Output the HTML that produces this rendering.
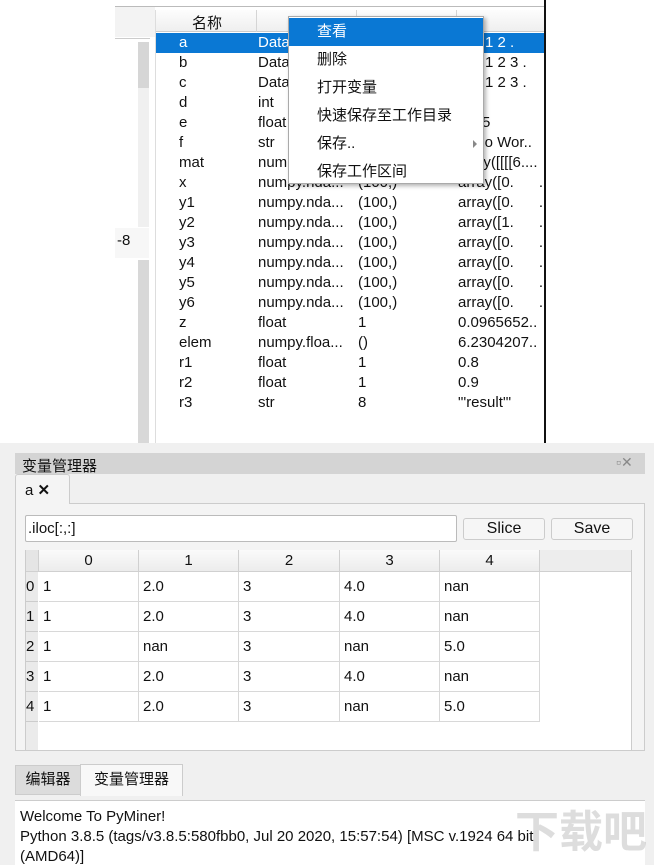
<!DOCTYPE html>
<html><head><meta charset="utf-8"><style>
*{margin:0;padding:0;box-sizing:border-box}
body{width:654px;height:865px;position:relative;overflow:hidden;background:#fff;font-family:"Liberation Sans","Noto Sans CJK SC",sans-serif;font-size:15px;color:#111}
.a{position:absolute}
.row{position:absolute;left:155px;width:389px;height:20px;line-height:20px;font-size:15px}
.row span{position:absolute;white-space:nowrap}
.cell{position:absolute;height:30px;line-height:30px;border-right:1px solid #d8d8d8;border-bottom:1px solid #d8d8d8;padding-left:4px;background:#fff}
.hd{position:absolute;top:550px;height:22px;line-height:22px;text-align:center;background:linear-gradient(#fafafa,#ececec);border-right:1px solid #d0d0d0;border-bottom:1px solid #d0d0d0}
.rh{position:absolute;left:26px;width:12px;height:30px;line-height:30px;background:#eaeaea;border-bottom:1px solid #ccc;font-size:15px;overflow:hidden}
.mi{position:absolute;left:0;width:194px;height:28px;line-height:28px;padding-left:28px;font-size:15px}
</style></head><body>
<div class="a" style="left:115px;top:6px;width:430px;height:1px;background:#bbb"></div>
<div class="a" style="left:115px;top:7px;width:40px;height:30px;background:#f3f3f3"></div>
<div class="a" style="left:115px;top:38px;width:35px;height:1px;background:#ccc"></div>
<div class="a" style="left:138px;top:42px;width:11px;height:185px;background:#f0f0f0"></div>
<div class="a" style="left:138px;top:42px;width:11px;height:46px;background:#d6d6d6"></div>
<div class="a" style="left:115px;top:228px;width:34px;height:30px;background:#f7f7f7"></div>
<div class="a" style="left:117px;top:232px;font-size:15px">-8</div>
<div class="a" style="left:138px;top:260px;width:11px;height:183px;background:#d8d8d8"></div>
<div class="a" style="left:155px;top:10px;width:389px;height:433px;border-left:1px solid #ddd;background:#fff"></div>
<div class="a" style="left:156px;top:10px;width:388px;height:22px;background:linear-gradient(#fdfdfd,#efefef);border-bottom:1px solid #ccc"></div>
<div class="a" style="left:256px;top:10px;width:1px;height:22px;background:#d5d5d5"></div>
<div class="a" style="left:356px;top:10px;width:1px;height:22px;background:#d5d5d5"></div>
<div class="a" style="left:456px;top:10px;width:1px;height:22px;background:#d5d5d5"></div>
<div class="a" style="left:192px;top:12px;font-size:15px">名称</div>
<div class="a" style="left:544px;top:0;width:2px;height:443px;background:#111"></div>
<div class="a" style="left:156px;top:33px;width:388px;height:20px;background:#0a78d4"></div>
<div class="row" style="top:33px;color:#fff"><span style="left:24px">a</span><span style="left:103px">Data</span><span style="left:330px">1 2 .</span></div>
<div class="row" style="top:53px"><span style="left:24px">b</span><span style="left:103px">Data</span><span style="left:330px">1 2 3 .</span></div>
<div class="row" style="top:73px"><span style="left:24px">c</span><span style="left:103px">Data</span><span style="left:330px">1 2 3 .</span></div>
<div class="row" style="top:93px"><span style="left:24px">d</span><span style="left:103px">int</span></div>
<div class="row" style="top:113px"><span style="left:24px">e</span><span style="left:103px">float</span><span style="left:327px">5</span></div>
<div class="row" style="top:133px"><span style="left:24px">f</span><span style="left:103px">str</span><span style="left:323px">llo Wor..</span></div>
<div class="row" style="top:153px"><span style="left:24px">mat</span><span style="left:103px">num</span><span style="left:320px">ay([[[[6....</span></div>
<div class="row" style="top:173px"><span style="left:24px">x</span><span style="left:103px">numpy.nda...</span><span style="left:203px">(100,)</span><span style="left:303px">array([0.&nbsp;&nbsp;&nbsp;&nbsp;&nbsp;&nbsp;.</span></div>
<div class="row" style="top:193px"><span style="left:24px">y1</span><span style="left:103px">numpy.nda...</span><span style="left:203px">(100,)</span><span style="left:303px">array([0.&nbsp;&nbsp;&nbsp;&nbsp;&nbsp;&nbsp;.</span></div>
<div class="row" style="top:213px"><span style="left:24px">y2</span><span style="left:103px">numpy.nda...</span><span style="left:203px">(100,)</span><span style="left:303px">array([1.&nbsp;&nbsp;&nbsp;&nbsp;&nbsp;&nbsp;.</span></div>
<div class="row" style="top:233px"><span style="left:24px">y3</span><span style="left:103px">numpy.nda...</span><span style="left:203px">(100,)</span><span style="left:303px">array([0.&nbsp;&nbsp;&nbsp;&nbsp;&nbsp;&nbsp;.</span></div>
<div class="row" style="top:253px"><span style="left:24px">y4</span><span style="left:103px">numpy.nda...</span><span style="left:203px">(100,)</span><span style="left:303px">array([0.&nbsp;&nbsp;&nbsp;&nbsp;&nbsp;&nbsp;.</span></div>
<div class="row" style="top:273px"><span style="left:24px">y5</span><span style="left:103px">numpy.nda...</span><span style="left:203px">(100,)</span><span style="left:303px">array([0.&nbsp;&nbsp;&nbsp;&nbsp;&nbsp;&nbsp;.</span></div>
<div class="row" style="top:293px"><span style="left:24px">y6</span><span style="left:103px">numpy.nda...</span><span style="left:203px">(100,)</span><span style="left:303px">array([0.&nbsp;&nbsp;&nbsp;&nbsp;&nbsp;&nbsp;.</span></div>
<div class="row" style="top:313px"><span style="left:24px">z</span><span style="left:103px">float</span><span style="left:203px">1</span><span style="left:303px">0.0965652..</span></div>
<div class="row" style="top:333px"><span style="left:24px">elem</span><span style="left:103px">numpy.floa...</span><span style="left:203px">()</span><span style="left:303px">6.2304207..</span></div>
<div class="row" style="top:353px"><span style="left:24px">r1</span><span style="left:103px">float</span><span style="left:203px">1</span><span style="left:303px">0.8</span></div>
<div class="row" style="top:373px"><span style="left:24px">r2</span><span style="left:103px">float</span><span style="left:203px">1</span><span style="left:303px">0.9</span></div>
<div class="row" style="top:393px"><span style="left:24px">r3</span><span style="left:103px">str</span><span style="left:203px">8</span><span style="left:303px">"'result'"</span></div>
<div class="a" style="left:288px;top:16px;width:196px;height:168px;background:#fff;border:1px solid #aaa;box-shadow:2px 2px 4px rgba(0,0,0,.3)">
<div class="mi" style="top:1px;background:#0a78d4;color:#fff">查看</div>
<div class="mi" style="top:29px">删除</div>
<div class="mi" style="top:57px">打开变量</div>
<div class="mi" style="top:85px">快速保存至工作目录</div>
<div class="mi" style="top:113px">保存..</div>
<div class="a" style="left:184px;top:123px;width:0;height:0;border-left:4px solid #888;border-top:4px solid transparent;border-bottom:4px solid transparent"></div>
<div class="mi" style="top:141px">保存工作区间</div>
</div>
<div class="a" style="left:0;top:443px;width:654px;height:422px;background:#f0f0f0"></div>
<div class="a" style="left:15px;top:453px;width:630px;height:21px;background:#d4d4d4"></div>
<div class="a" style="left:22px;top:455px;font-size:15px">变量管理器</div>
<div class="a" style="left:616px;top:454px;font-size:14px;color:#888">▫✕</div>
<div class="a" style="left:15px;top:503px;width:630px;height:248px;border:1px solid #ccc;background:#f4f4f4"></div>
<div class="a" style="left:15px;top:474px;width:55px;height:30px;background:#f4f4f4;border:1px solid #ccc;border-bottom:none;border-radius:3px 3px 0 0"></div>
<div class="a" style="left:25px;top:481px;font-size:15px">a <b>✕</b></div>
<div class="a" style="left:25px;top:515px;width:432px;height:27px;background:#fff;border:1px solid #bbb;border-radius:2px;line-height:25px;padding-left:2px">.iloc[:,:]</div>
<div class="a" style="left:463px;top:518px;width:82px;height:22px;background:#f6f6f6;border:1px solid #ccc;border-radius:3px;text-align:center;line-height:20px;font-size:16px">Slice</div>
<div class="a" style="left:551px;top:518px;width:82px;height:22px;background:#f6f6f6;border:1px solid #ccc;border-radius:3px;text-align:center;line-height:20px;font-size:16px">Save</div>
<div class="a" style="left:25px;top:550px;width:607px;height:201px;background:#fff;border:1px solid #ccc"></div>
<div class="a" style="left:26px;top:551px;width:12px;height:199px;background:#ebebeb"></div>
<div class="hd" style="left:26px;width:13px;background:#e5e5e5"></div>
<div class="hd" style="left:39px;width:100px">0</div>
<div class="hd" style="left:139px;width:100px">1</div>
<div class="hd" style="left:239px;width:101px">2</div>
<div class="hd" style="left:340px;width:100px">3</div>
<div class="hd" style="left:440px;width:100px">4</div>
<div class="hd" style="left:540px;width:91px;background:#ededed;border-right:none"></div>
<div id="tbl"></div>
<script>
var d=[["1","2.0","3","4.0","nan"],["1","2.0","3","4.0","nan"],["1","nan","3","nan","5.0"],["1","2.0","3","4.0","nan"],["1","2.0","3","nan","5.0"]];
var L=[39,139,239,340,440],W=[100,100,101,100,100],h="";
for(var r=0;r<5;r++){var t=572+r*30;h+='<div class="rh" style="top:'+t+'px">'+r+'</div>';
for(var c=0;c<5;c++)h+='<div class="cell" style="left:'+L[c]+'px;top:'+t+'px;width:'+W[c]+'px">'+d[r][c]+'</div>';}
document.getElementById("tbl").innerHTML=h;
</script>
<div class="a" style="left:15px;top:765px;width:66px;height:30px;background:#dcdcdc;border:1px solid #ccc;text-align:center;line-height:28px">编辑器</div>
<div class="a" style="left:80px;top:764px;width:103px;height:32px;background:#f8f8f8;border:1px solid #ccc;border-bottom:none;text-align:center;line-height:30px">变量管理器</div>
<div class="a" style="left:15px;top:800px;width:630px;height:65px;background:#fff;border-top:1px solid #ccc"></div>
<div class="a" style="left:20px;top:807px;font-size:15px;line-height:20px;white-space:nowrap">Welcome To PyMiner!<br>Python 3.8.5 (tags/v3.8.5:580fbb0, Jul 20 2020, 15:57:54) [MSC v.1924 64 bit<br>(AMD64)]</div>
<div class="a" style="left:515px;top:808px;font-size:44px;line-height:50px;color:rgba(170,170,170,.4);font-weight:bold;white-space:nowrap">下载吧</div>
</body></html>
